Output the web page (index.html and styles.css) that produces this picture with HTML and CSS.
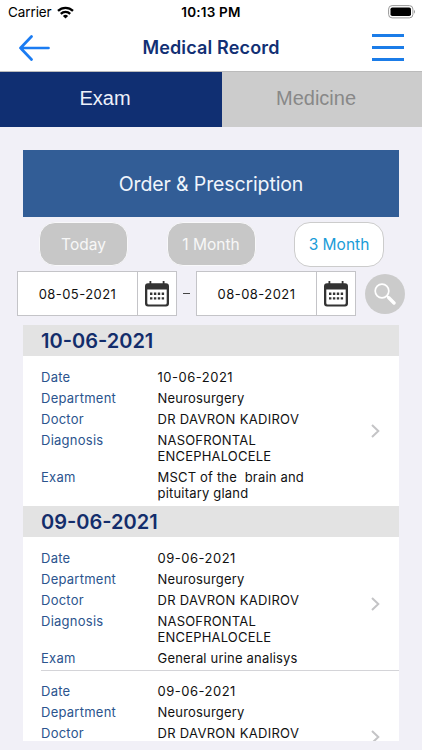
FILE: index.html
```html
<!DOCTYPE html>
<html lang="en">
<head>
  <meta charset="UTF-8">
  <meta name="viewport" content="width=device-width, initial-scale=1.0">
  <title>Medical Record</title>
  <link rel="stylesheet" href="styles.css">
</head>
<body>
  <svg class="defs" width="0" height="0">
    <symbol id="calendar" viewBox="0 0 24 26">
      <path fill="#333" fill-rule="evenodd" d="M4.500 0h1.800v2.200h11.400V0h1.800v2.200h1.500a3 3 0 0 1 3 3V22.500a3 3 0 0 1-3 3H3a3 3 0 0 1-3-3V5.200a3 3 0 0 1 3-3h1.500zM2.300 8.600v13.400a1.500 1.500 0 0 0 1.500 1.500h16.400a1.500 1.500 0 0 0 1.500-1.500V8.600z"/>
      <path fill="#333" d="M5 11.500h2.400v2.400H5zM8.900 11.500h2.400v2.400H8.900zM12.800 11.500h2.400v2.400h-2.400zM16.700 11.500h2.400v2.400h-2.400zM5 16.200h2.400v2.400H5zM8.900 16.200h2.400v2.400H8.900zM12.800 16.200h2.400v2.400h-2.400zM16.700 16.200h2.400v2.400h-2.400z"/>
    </symbol>
    <symbol id="chevron" viewBox="0 0 9 14">
      <path d="M1 1l6.300 6L1 13" fill="none" stroke="#c4c4c6" stroke-width="2"/>
    </symbol>
  </svg>

  <div class="statusbar">
    <div class="carrier">
      <span>Carrier</span>
      <svg width="17" height="13" viewBox="0 0 17 13">
        <g fill="none" stroke="#000" stroke-width="2.300">
          <path d="M1 4.900a10.800 10.800 0 0 1 15 0"/>
          <path d="M3.800 7.800a6.800 6.800 0 0 1 9.400 0"/>
        </g>
        <path d="M8.500 12.500L5.900 9.900a3.800 3.800 0 0 1 5.200 0z"/>
      </svg>
    </div>
    <div class="time">10:13 PM</div>
    <svg class="battery" width="28" height="14" viewBox="0 0 28 14">
      <rect x=".6" y=".6" width="24.300" height="12.300" rx="3.500" fill="none" stroke="#999"/>
      <rect x="2.500" y="2.500" width="20.500" height="8.500" rx="1.800"/>
      <path d="M26 4.700q2 2 0 4z" fill="#999"/>
    </svg>
  </div>

  <header class="header">
    <svg class="back" width="31" height="26" viewBox="0 0 31 26">
      <path d="M12.500 1.500L1.500 13l11 11.500M1.500 13h28" fill="none" stroke="#1b7cf2" stroke-width="2.700" stroke-linecap="round" stroke-linejoin="round"/>
    </svg>
    <h1>Medical Record</h1>
    <div class="menu"><span></span><span></span><span></span></div>
  </header>

  <nav class="tabs">
    <div class="tab active">Exam</div>
    <div class="tab">Medicine</div>
  </nav>

  <main class="content">
    <div class="banner"><span>Order &amp; Prescription</span></div>

    <div class="periods">
      <button class="period">Today</button>
      <button class="period">1 Month</button>
      <button class="period selected">3 Month</button>
    </div>

    <div class="range">
      <div class="date-box">
        <span class="date">08-05-2021</span>
        <span class="cal"><svg width="24" height="26"><use href="#calendar"/></svg></span>
      </div>
      <span class="dash"></span>
      <div class="date-box">
        <span class="date">08-08-2021</span>
        <span class="cal"><svg width="24" height="26"><use href="#calendar"/></svg></span>
      </div>
      <button class="search">
        <svg width="22" height="22" viewBox="0 0 22 22">
          <circle cx="8" cy="8" r="6.800" fill="none" stroke="#fff" stroke-width="1.700"/>
          <path d="M12.800 12.800l2 2" stroke="#fff" stroke-width="2"/>
          <path d="M14.800 14.800l5.200 5.200" stroke="#fff" stroke-width="3.400" stroke-linecap="round"/>
        </svg>
      </button>
    </div>

    <div class="list">
      <h2>10-06-2021</h2>
      <div class="record">
        <dl>
          <dt>Date</dt><dd class="day">10-06-2021</dd>
          <dt>Department</dt><dd>Neurosurgery</dd>
          <dt>Doctor</dt><dd class="caps">DR DAVRON KADIROV</dd>
          <dt>Diagnosis</dt><dd>NASOFRONTAL<br>ENCEPHALOCELE</dd>
          <dt>Exam</dt><dd>MSCT of the&nbsp; brain and<br>pituitary gland</dd>
        </dl>
        <svg class="chevron" width="9" height="14"><use href="#chevron"/></svg>
      </div>

      <h2>09-06-2021</h2>
      <div class="record">
        <dl>
          <dt>Date</dt><dd class="day">09-06-2021</dd>
          <dt>Department</dt><dd>Neurosurgery</dd>
          <dt>Doctor</dt><dd class="caps">DR DAVRON KADIROV</dd>
          <dt>Diagnosis</dt><dd>NASOFRONTAL<br>ENCEPHALOCELE</dd>
          <dt>Exam</dt><dd>General urine analisys</dd>
        </dl>
        <svg class="chevron" width="9" height="14"><use href="#chevron"/></svg>
      </div>
      <div class="record next">
        <dl>
          <dt>Date</dt><dd class="day">09-06-2021</dd>
          <dt>Department</dt><dd>Neurosurgery</dd>
          <dt>Doctor</dt><dd class="caps">DR DAVRON KADIROV</dd>
        </dl>
        <svg class="chevron" width="9" height="14"><use href="#chevron"/></svg>
      </div>
    </div>
  </main>
</body>
</html>
```
FILE: styles.css
```css
* {
  box-sizing: border-box;
}
body {
  margin: 0;
  height: 750px;
  overflow: hidden;
  display: flex;
  flex-direction: column;
  font-family: Inter, "Liberation Sans", sans-serif;
  background: #f1f0f7;
  color: #111;
}
svg {
  display: block;
}
.defs {
  position: absolute;
}
.statusbar {
  height: 24px;
  padding: 0 6px 0 8px;
  display: grid;
  grid-template-columns: 1fr auto 1fr;
  align-items: center;
  background: #fff;
  color: #000;
  font-size: 13.5px;
}
.carrier {
  display: flex;
  align-items: center;
  gap: 5px;
}
.carrier span {
  letter-spacing: -0.1px;
}
.time {
  font-weight: 600;
  letter-spacing: 0.2px;
  margin-right: 2px;
}
.battery {
  justify-self: end;
}
.header {
  height: 48px;
  padding: 0 18px 0 19px;
  display: flex;
  align-items: center;
  justify-content: space-between;
  background: #fff;
  border-bottom: 1px solid #bbb;
}
h1 {
  margin: 0;
  font-size: 18px;
  font-weight: 600;
  letter-spacing: 0.15px;
  color: #123074;
}
.menu {
  width: 32px;
  display: flex;
  flex-direction: column;
  gap: 9px;
}
.menu span {
  height: 3px;
  background: #1b7ce8;
}
.tabs {
  height: 55px;
  display: flex;
}
.tab {
  flex: 1;
  padding: 0 12px 3px 0;
  display: flex;
  align-items: center;
  justify-content: center;
  font-family: "Liberation Sans", sans-serif;
  font-size: 20px;
  background: #ccc;
  color: #888;
}
.tab.active {
  flex: none;
  width: 222px;
  background: #102f72;
  color: #edf1fa;
}
.content {
  height: 614px;
  padding: 23px 23px 0;
  display: flex;
  flex-direction: column;
}
.banner {
  height: 67px;
  display: flex;
  flex-shrink: 0;
  align-items: center;
  justify-content: center;
  background: #325d96;
  color: #f0f5fc;
  font-size: 19.5px;
  letter-spacing: -0.13px;
}
.periods {
  display: flex;
  align-items: center;
  justify-content: space-between;
  margin: 4px 15px 0 16px;
  height: 46px;
  flex-shrink: 0;
}
.period {
  width: 89px;
  height: 44px;
  padding: 0;
  border: 1px solid #f8f8fa;
  border-radius: 16px;
  background: #c7c7c7;
  color: #f7f7f7;
  font-family: inherit;
  font-size: 15.5px;
}
.period.selected {
  width: 90px;
  height: 45px;
  border-color: #ccc;
  background: #fff;
  color: #1a9cd8;
}
.range {
  display: flex;
  align-items: center;
  height: 45px;
  flex-shrink: 0;
  margin: 4px -6px 9px;
}
.date-box {
  display: flex;
  width: 160px;
  height: 45px;
  border: 1px solid #c4c4c8;
  background: #fff;
}
.date {
  width: 120px;
  display: flex;
  align-items: center;
  justify-content: center;
  border-right: 1px solid #c4c4c8;
  font-size: 13px;
  letter-spacing: 0.45px;
}
.cal {
  flex: 1;
  display: flex;
  align-items: center;
  justify-content: center;
}
.dash {
  width: 7px;
  height: 1px;
  margin: 0 6px;
  background: #444;
}
.search {
  width: 40px;
  height: 40px;
  margin-left: auto;
  padding: 0;
  border: 0;
  border-radius: 50%;
  display: flex;
  align-items: center;
  justify-content: center;
  background: #cbcbcb;
}
.list {
  flex: 1;
  min-height: 0;
  overflow: hidden;
  background: #fff;
}
h2 {
  height: 31px;
  margin: 0;
  padding-left: 18px;
  line-height: 32px;
  font-size: 20px;
  font-weight: 600;
  background: #e3e3e3;
  color: #132d6b;
}
.record {
  display: flex;
  align-items: center;
  justify-content: space-between;
  padding: 13px 18px 5px;
}
.record.next {
  position: relative;
  height: 134px;
  margin-top: -1px;
}
.record.next::before {
  content: "";
  position: absolute;
  top: 0;
  left: 18px;
  right: 0;
  height: 1px;
  background: #d4d4d8;
}
dl {
  margin: 0;
  align-self: flex-start;
  display: grid;
  grid-template-columns: 116.5px auto;
  row-gap: 5px;
  font-size: 13px;
  line-height: 16px;
  letter-spacing: 0.19px;
}
dt {
  color: #2b548e;
  letter-spacing: 0.25px;
}
dd {
  margin: 0;
}
dd.day {
  letter-spacing: 0.5px;
}
dd.caps {
  letter-spacing: 0.3px;
}
.chevron {
  margin: 0 1px 8px 0;
}
```
